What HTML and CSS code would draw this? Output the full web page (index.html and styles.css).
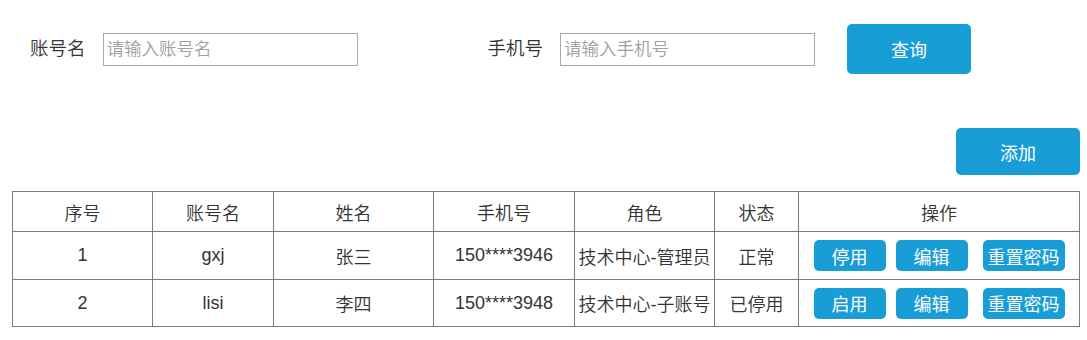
FILE: index.html
```html
<!DOCTYPE html>
<html lang="zh-CN">
<head>
<meta charset="utf-8">
<title>账号管理</title>
<link rel="stylesheet" href="styles.css">
</head>
<body>
<div class="page">
  <div class="search">
    <div class="field">
      <span class="label">账号名</span>
      <input class="input" type="text" placeholder="请输入账号名">
    </div>
    <div class="field field-phone">
      <span class="label">手机号</span>
      <input class="input" type="text" placeholder="请输入手机号">
    </div>
    <button class="btn btn-query">查询</button>
  </div>
  <div class="toolbar">
    <button class="btn btn-add">添加</button>
  </div>
  <table class="grid">
    <colgroup>
      <col class="c-no">
      <col class="c-acc">
      <col class="c-name">
      <col class="c-phone">
      <col class="c-role">
      <col class="c-state">
      <col class="c-ops">
    </colgroup>
    <thead>
      <tr class="row-head">
        <th>序号</th><th>账号名</th><th>姓名</th><th>手机号</th><th>角色</th><th>状态</th><th>操作</th>
      </tr>
    </thead>
    <tbody>
      <tr class="row-1">
        <td>1</td><td>gxj</td><td>张三</td><td>150****3946</td><td>技术中心-管理员</td><td>正常</td>
        <td><div class="ops"><button class="btn btn-op">停用</button><button class="btn btn-op btn-op-edit">编辑</button><button class="btn btn-op btn-op-wide">重置密码</button></div></td>
      </tr>
      <tr class="row-2">
        <td>2</td><td>lisi</td><td>李四</td><td>150****3948</td><td>技术中心-子账号</td><td>已停用</td>
        <td><div class="ops"><button class="btn btn-op">启用</button><button class="btn btn-op btn-op-edit">编辑</button><button class="btn btn-op btn-op-wide">重置密码</button></div></td>
      </tr>
    </tbody>
  </table>
</div>
</body>
</html>
```

FILE: styles.css
```css
html, body {
  margin: 0;
  padding: 0;
  background: #ffffff;
}

body {
  font-family: "Liberation Sans", "Noto Sans CJK SC", sans-serif;
  font-size: 18px;
  font-weight: 350;
  color: #333333;
}

.page {
  padding-top: 24px;
}

.search {
  display: flex;
  align-items: center;
  height: 50px;
  padding-left: 30px;
}

.field {
  display: flex;
  align-items: center;
  gap: 17px;
}

.field-phone {
  margin-left: 130px;
}

.label {
  font-size: 18.5px;
  color: #333333;
  line-height: 1;
}

.input {
  box-sizing: border-box;
  width: 255px;
  height: 33px;
  margin: 0;
  padding: 0 3px;
  border: 1px solid #a9a9a9;
  font-family: "Liberation Sans", "Noto Sans CJK SC", sans-serif;
  font-size: 17.5px;
  font-weight: 350;
  color: #333333;
  outline: none;
}

.input::placeholder {
  color: #a0a0a0;
}

.btn {
  box-sizing: border-box;
  border: none;
  margin: 0;
  padding: 0;
  background: #199dd7;
  color: #ffffff;
  font-family: "Liberation Sans", "Noto Sans CJK SC", sans-serif;
  font-size: 18px;
  font-weight: 400;
  border-radius: 5px;
  cursor: pointer;
}

.btn-query {
  width: 124px;
  height: 50px;
  margin-left: 32px;
}

.toolbar {
  display: flex;
  justify-content: flex-end;
  margin-top: 54px;
  padding-right: 7px;
}

.btn-add {
  width: 124px;
  height: 47px;
}

.grid {
  margin-top: 16px;
  margin-left: 12px;
  width: 1067px;
  border-collapse: collapse;
  table-layout: fixed;
  font-size: 18px;
  color: #333333;
}

.grid th,
.grid td {
  border: 1px solid #7a7a7a;
  padding: 0;
  text-align: center;
  vertical-align: middle;
  font-weight: 350;
}

.c-no { width: 140px; }
.c-acc { width: 121px; }
.c-name { width: 160px; }
.c-phone { width: 141px; }
.c-role { width: 140px; }
.c-state { width: 84px; }
.c-ops { width: 281px; }

.row-head { height: 40px; }
.row-1 { height: 48px; }
.row-2 { height: 47px; }

.ops {
  display: flex;
  justify-content: center;
  align-items: center;
}

.btn-op {
  width: 72px;
  height: 31px;
  border-radius: 5px;
}

.btn-op-edit {
  margin-left: 10px;
  margin-right: 15px;
}

.btn-op-wide {
  width: 82px;
}
```
